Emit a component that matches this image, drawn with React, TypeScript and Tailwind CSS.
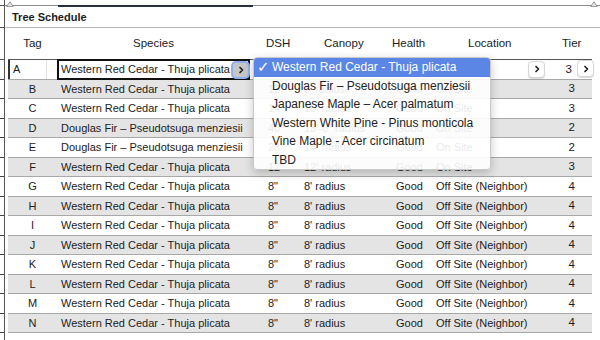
const WRC = "Western Red Cedar - Thuja plicata";
const DF = "Douglas Fir – Pseudotsuga menziesii";

const rows = [
  { tag: "A", species: WRC, dsh: '14"', canopy: "10' radius", health: "Good", location: "On Site", tier: "3" },
  { tag: "B", species: WRC, dsh: '12"', canopy: "8' radius", health: "Good", location: "On Site", tier: "3" },
  { tag: "C", species: WRC, dsh: '14"', canopy: "10' radius", health: "Good", location: "On Site", tier: "3" },
  { tag: "D", species: DF, dsh: '40"', canopy: "13'-6\" radius", health: "Good", location: "On Site", tier: "2" },
  { tag: "E", species: DF, dsh: '28"', canopy: "14' radius", health: "Good", location: "On Site", tier: "2" },
  { tag: "F", species: WRC, dsh: '12"', canopy: "12' radius", health: "Good", location: "On Site", tier: "3" },
  ...["G", "H", "I", "J", "K", "L", "M", "N"].map((tag) => ({
    tag,
    species: WRC,
    dsh: '8"',
    canopy: "8' radius",
    health: "Good",
    location: "Off Site (Neighbor)",
    tier: "4",
  })),
];

const options = [
  "Western Red Cedar - Thuja plicata",
  "Douglas Fir – Pseudotsuga menziesii",
  "Japanese Maple – Acer palmatum",
  "Western White Pine - Pinus monticola",
  "Vine Maple - Acer circinatum",
  "TBD",
];

const Chevron = () => (
  <svg viewBox="0 0 8 8" className="h-[8px] w-[8px] text-[#222]">
    <path d="M3 1.5 L5.5 4 L3 6.5" fill="none" stroke="currentColor" strokeWidth="1.7" strokeLinecap="round" strokeLinejoin="round" />
  </svg>
);

const PopButton = () => (
  <div className="flex h-[17px] w-[17px] items-center justify-center rounded-[4px] border border-[#d6d6d6] bg-white shadow-[0_1px_1px_rgba(0,0,0,0.15)]">
    <Chevron />
  </div>
);

const Corner = () => (
  <svg viewBox="0 0 8 6" className="h-[6px] w-[8px]">
    <path d="M4 0.8 L7.2 5.4 L0.8 5.4 Z" fill="#eee" stroke="#888" strokeWidth="0.9" />
  </svg>
);

export default function App() {
  return (
    <div className="relative flex h-[340px] w-[600px] overflow-hidden bg-white text-[#1c1c1c] [font-family:'Liberation_Sans',Arial,sans-serif]">
      {/* ruler ticks on the far left */}
      <div className="flex w-[4px] shrink-0 flex-col">
        <div className="h-[6px] border-b border-[#555]" />
        <div className="h-[22px] border-b border-[#555]" />
        <div className="h-[32px] border-b border-[#555]" />
        {rows.map((r) => (
          <div key={r.tag} className="h-[19.5px] border-b border-[#444]" />
        ))}
      </div>

      <div className="flex flex-1 flex-col border-l border-[#555]">
        {/* top rule */}
        <div className="relative h-[6px] shrink-0">
          <div className="absolute bottom-0 left-0 right-0 h-px bg-[#8c8c8c]" />
          <div className="absolute bottom-[-1px] left-[53px] h-[2px] w-[195px] bg-[#26303c]" />
          <div className="absolute left-[1px] top-[1px]">
            <Corner />
          </div>
          <div className="absolute right-[2px] top-[1px]">
            <Corner />
          </div>
        </div>

        {/* title */}
        <div className="flex h-[22px] shrink-0 items-center border-b border-[#b4b4b4] pl-[7px] pt-px text-[11px] font-bold">
          Tree Schedule
        </div>

        {/* header */}
        <div className="ml-[3px] flex h-[31px] w-[584px] shrink-0 items-center text-[11.5px]">
          <div className="w-[49px] text-center">Tag</div>
          <div className="w-[193px] text-center">Species</div>
          <div className="w-[50px] pl-[16px]">DSH</div>
          <div className="w-[82px] pl-[24px]">Canopy</div>
          <div className="w-[48px] pl-[10px]">Health</div>
          <div className="w-[115px] pl-[38px]">Location</div>
          <div className="w-[47px] pl-[17px]">Tier</div>
        </div>

        {/* rows */}
        <div className="flex flex-col text-[11px]">
          {rows.map((r, i) =>
            i === 0 ? (
              <div key={r.tag} className="ml-[3px] flex h-[20.5px] w-[584px] border-y border-t-[#555] border-b-[#a8a8a8] bg-white">
                <div className="flex w-[49px] items-center border-l-2 border-[#333] pl-[3px]">
                  <span className="w-[33px]">A</span>
                  <div className="h-full border-l border-[#e2e2e2]" />
                </div>
                <div className="mt-[-1px] flex h-[21px] w-[193px] items-center justify-between border-2 border-[#111] pl-[2px]">
                  <span>{r.species}</span>
                  <div className="flex h-[14px] w-[15px] items-center justify-center rounded-[3px] bg-[#c6c6c6] ring-2 ring-[#8fb0ee]">
                    <Chevron />
                  </div>
                </div>
                <div className="flex w-[50px] items-center pl-[18px]">{r.dsh}</div>
                <div className="flex w-[82px] items-center pl-[4px]">{r.canopy}</div>
                <div className="flex w-[48px] items-center pl-[14px]">{r.health}</div>
                <div className="flex w-[115px] items-center justify-between pl-[6px]">
                  <span>{r.location}</span>
                  <PopButton />
                </div>
                <div className="relative flex w-[47px] items-center justify-end pr-[20px] text-[11.5px]">
                  {r.tier}
                  <div className="absolute right-[-2px] top-[0px]">
                    <PopButton />
                  </div>
                </div>
              </div>
            ) : (
              <div
                key={r.tag}
                className={`ml-[3px] flex h-[19.5px] w-[584px] items-center border-b border-[#a8a8a8] ${
                  i % 2 === 1 ? "bg-[#e4e4e4]" : "bg-white"
                }`}
              >
                <div className="w-[49px] text-center">{r.tag}</div>
                <div className="w-[193px] pl-[4px]">{r.species}</div>
                <div className="w-[50px] pl-[18px]">{r.dsh}</div>
                <div className="w-[82px] pl-[4px]">{r.canopy}</div>
                <div className="w-[48px] pl-[14px]">{r.health}</div>
                <div className="w-[115px] pl-[6px]">{r.location}</div>
                <div className="w-[47px] pr-[17px] text-right text-[11.5px]">{r.tier}</div>
              </div>
            )
          )}
        </div>
      </div>

      {/* species popup menu */}
      <div className="absolute left-[253px] top-[57px] w-[238px] overflow-hidden rounded-[4px] border border-[#c8c8c8] bg-white/[0.9] shadow-[0_3px_10px_rgba(0,0,0,0.22)]">
        {options.map((o, i) => (
          <div
            key={o}
            className={`relative flex h-[18.5px] items-center pl-[18px] text-[12px] ${
              i === 0 ? "bg-[#5b86e5] text-white" : "text-[#222]"
            }`}
          >
            {i === 0 && (
              <span className="absolute left-[3px] top-[-2px] text-[15px] font-bold [font-family:'DejaVu_Sans',sans-serif]">✓</span>
            )}
            {o}
          </div>
        ))}
      </div>
    </div>
  );
}
